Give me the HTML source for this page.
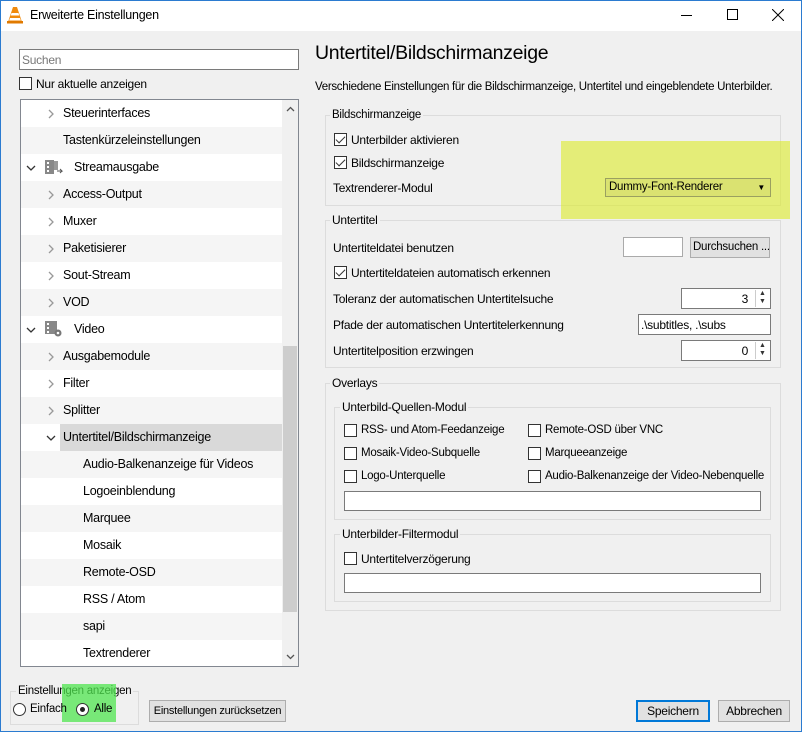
<!DOCTYPE html>
<html><head><meta charset="utf-8"><style>
*{box-sizing:border-box;margin:0;padding:0}
body{width:802px;height:732px;overflow:hidden;background:#f0f0f0;font-family:"Liberation Sans",sans-serif;font-size:12px;letter-spacing:-0.25px;color:#000;position:relative}
.a{position:absolute;white-space:nowrap}
.win{position:absolute;left:0;top:0;width:802px;height:732px;border:1px solid #2b7bd0;pointer-events:none}
.tb{position:absolute;left:0;top:0;width:802px;height:31px;background:#fff}
.row{position:absolute;left:21px;width:261px;height:27px;line-height:27px;font-size:12.5px}
.row.g{background:#f5f5f5}
.chev{position:absolute}
.gb{position:absolute;border:1px solid #dcdcdc}
.lg{position:absolute;background:#f0f0f0;padding:0 2px;line-height:14px;font-size:12px;white-space:nowrap}
.cb{position:absolute;width:13px;height:13px;border:1px solid #333;background:#fff}
.cb.c::after{content:"";position:absolute;left:3px;top:0px;width:4px;height:8px;border:solid #333;border-width:0 1.5px 1.5px 0;transform:rotate(45deg)}
.inp{position:absolute;background:#fff;border:1px solid #7a7a7a}
.btn{position:absolute;background:#e1e1e1;border:1px solid #adadad;text-align:center;font-size:12px;white-space:nowrap;overflow:hidden}
.spin{position:absolute;right:1px;top:1px;width:14px;height:17px;border-left:1px solid #ccc;font-size:7px;line-height:8px;text-align:center;color:#333;letter-spacing:0}
</style></head><body>
<div class="tb"></div>
<svg class="a" style="left:7px;top:6px" width="16" height="18" viewBox="0 0 16 18"><path d="M6 1h4l5 15H1z" fill="#f08a0c"/><path d="M4.5 7h7l.8 2.5H3.7zM3 12h10l.8 2.5H2.2z" fill="#fff"/><rect x="0" y="15" width="16" height="2.5" fill="#e07a00"/></svg>
<div class="a" style="left:30px;top:8px;font-size:12.5px">Erweiterte Einstellungen</div>
<div class="a" style="left:681px;top:15px;width:11px;height:1px;background:#000"></div>
<div class="a" style="left:727px;top:9px;width:11px;height:11px;border:1px solid #000"></div>
<svg class="a" style="left:772px;top:9px" width="12" height="12"><path d="M0 0L12 12M12 0L0 12" stroke="#000" stroke-width="1"/></svg>

<div class="inp" style="left:19px;top:49px;width:280px;height:21px"></div>
<div class="a" style="left:22px;top:53px;color:#777">Suchen</div>
<div class="cb" style="left:19px;top:77px"></div>
<div class="a" style="left:36px;top:77px">Nur aktuelle anzeigen</div>

<div class="a" style="left:20px;top:99px;width:279px;height:568px;border:1px solid #828790;background:#fff"></div>
<div class="a" style="left:21px;top:100px;width:277px;height:566px;overflow:hidden">
<svg width="0" height="0" style="position:absolute"><defs><path id="r" d="M1 1l4 4-4 4" stroke="#999" stroke-width="1.3" fill="none"/><path id="d" d="M1 1l4 4 4-4" stroke="#333" stroke-width="1.3" fill="none"/></defs></svg>
<div class="row" style="left:0;top:0"><svg class="chev" style="left:27px;top:9px" width="7" height="10"><use href="#r"/></svg><span class="a" style="left:42px">Steuerinterfaces</span></div>
<div class="row g" style="left:0;top:27px"><span class="a" style="left:42px">Tastenkürzeleinstellungen</span></div>
<div class="row" style="left:0;top:54px"><svg class="chev" style="left:5px;top:11px" width="10" height="7"><use href="#d"/></svg><svg class="a" style="left:24px;top:6px" width="20" height="15"><rect x="0" y="0" width="9" height="14" fill="#888"/><rect x="2" y="2" width="2" height="2" fill="#fff"/><rect x="2" y="6" width="2" height="2" fill="#fff"/><rect x="2" y="10" width="2" height="2" fill="#fff"/><rect x="9" y="1" width="4" height="9" fill="#999"/><path d="M12 11h5l-2-2M17 11l-2 2" stroke="#555" fill="none"/></svg><span class="a" style="left:53px">Streamausgabe</span></div>
<div class="row g" style="left:0;top:81px"><svg class="chev" style="left:27px;top:9px" width="7" height="10"><use href="#r"/></svg><span class="a" style="left:42px">Access-Output</span></div>
<div class="row" style="left:0;top:108px"><svg class="chev" style="left:27px;top:9px" width="7" height="10"><use href="#r"/></svg><span class="a" style="left:42px">Muxer</span></div>
<div class="row g" style="left:0;top:135px"><svg class="chev" style="left:27px;top:9px" width="7" height="10"><use href="#r"/></svg><span class="a" style="left:42px">Paketisierer</span></div>
<div class="row" style="left:0;top:162px"><svg class="chev" style="left:27px;top:9px" width="7" height="10"><use href="#r"/></svg><span class="a" style="left:42px">Sout-Stream</span></div>
<div class="row g" style="left:0;top:189px"><svg class="chev" style="left:27px;top:9px" width="7" height="10"><use href="#r"/></svg><span class="a" style="left:42px">VOD</span></div>
<div class="row" style="left:0;top:216px"><svg class="chev" style="left:5px;top:11px" width="10" height="7"><use href="#d"/></svg><svg class="a" style="left:24px;top:5px" width="18" height="16"><rect x="0" y="0" width="12" height="13" fill="#888"/><rect x="2" y="2" width="2" height="2" fill="#fff"/><rect x="2" y="6" width="2" height="2" fill="#fff"/><rect x="2" y="10" width="2" height="2" fill="#fff"/><circle cx="13" cy="12" r="3.5" fill="#777"/><circle cx="13" cy="12" r="1.3" fill="#fff"/></svg><span class="a" style="left:53px">Video</span></div>
<div class="row g" style="left:0;top:243px"><svg class="chev" style="left:27px;top:9px" width="7" height="10"><use href="#r"/></svg><span class="a" style="left:42px">Ausgabemodule</span></div>
<div class="row" style="left:0;top:270px"><svg class="chev" style="left:27px;top:9px" width="7" height="10"><use href="#r"/></svg><span class="a" style="left:42px">Filter</span></div>
<div class="row g" style="left:0;top:297px"><svg class="chev" style="left:27px;top:9px" width="7" height="10"><use href="#r"/></svg><span class="a" style="left:42px">Splitter</span></div>
<div class="row" style="left:0;top:324px"><div class="a" style="left:39px;top:0;width:222px;height:27px;background:#d9d9d9"></div><svg class="chev" style="left:25px;top:11px" width="10" height="7"><use href="#d"/></svg><span class="a" style="left:42px">Untertitel/Bildschirmanzeige</span></div>
<div class="row g" style="left:0;top:351px"><span class="a" style="left:62px">Audio-Balkenanzeige für Videos</span></div>
<div class="row" style="left:0;top:378px"><span class="a" style="left:62px">Logoeinblendung</span></div>
<div class="row g" style="left:0;top:405px"><span class="a" style="left:62px">Marquee</span></div>
<div class="row" style="left:0;top:432px"><span class="a" style="left:62px">Mosaik</span></div>
<div class="row g" style="left:0;top:459px"><span class="a" style="left:62px">Remote-OSD</span></div>
<div class="row" style="left:0;top:486px"><span class="a" style="left:62px">RSS / Atom</span></div>
<div class="row g" style="left:0;top:513px"><span class="a" style="left:62px">sapi</span></div>
<div class="row" style="left:0;top:540px"><span class="a" style="left:62px">Textrenderer</span></div>
<div class="a" style="left:261px;top:0;width:16px;height:566px;background:#f0f0f0"></div>
<div class="a" style="left:262px;top:246px;width:14px;height:266px;background:#cdcdcd"></div>
<svg class="a" style="left:265px;top:6px" width="9" height="6"><path d="M1 5l3.5-3.5L8 5" stroke="#555" stroke-width="1.3" fill="none"/></svg>
<svg class="a" style="left:265px;top:554px" width="9" height="6"><path d="M1 1l3.5 3.5L8 1" stroke="#555" stroke-width="1.3" fill="none"/></svg>
</div>

<div class="gb" style="left:10px;top:691px;width:129px;height:34px"></div>
<div class="lg" style="left:16px;top:684px;font-size:11.5px">Einstellungen anzeigen</div>
<div class="a" style="left:62px;top:684px;width:54px;height:38px;background:rgba(80,230,80,.75)"></div>
<div class="a" style="left:13px;top:703px;width:13px;height:13px;border:1px solid #333;border-radius:50%;background:#fff"></div>
<div class="a" style="left:30px;top:703px;font-size:11.5px">Einfach</div>
<div class="a" style="left:76px;top:703px;width:13px;height:13px;border:1px solid #333;border-radius:50%;background:#fff"><div style="position:absolute;left:3px;top:3px;width:5px;height:5px;border-radius:50%;background:#222"></div></div>
<div class="a" style="left:94px;top:703px;font-size:11.5px">Alle</div>
<div class="btn" style="left:149px;top:700px;width:137px;height:22px;line-height:20px;font-size:11px">Einstellungen zurücksetzen</div>
<div class="btn" style="left:636px;top:700px;width:74px;height:22px;line-height:18px;border:2px solid #0078d7">Speichern</div>
<div class="btn" style="left:718px;top:700px;width:72px;height:22px;line-height:20px">Abbrechen</div>

<div class="a" style="left:315px;top:42px;font-size:19.5px;letter-spacing:-0.3px">Untertitel/Bildschirmanzeige</div>
<div class="a" style="left:315px;top:81px;font-size:11.5px;letter-spacing:-0.3px">Verschiedene Einstellungen für die Bildschirmanzeige, Untertitel und eingeblendete Unterbilder.</div>

<div class="gb" style="left:325px;top:115px;width:456px;height:91px"></div>
<div class="lg" style="left:330px;top:108px;font-size:11.5px">Bildschirmanzeige</div>
<div class="cb c" style="left:334px;top:133px"></div><div class="a" style="left:351px;top:133px">Unterbilder aktivieren</div>
<div class="cb c" style="left:334px;top:156px"></div><div class="a" style="left:351px;top:156px">Bildschirmanzeige</div>
<div class="a" style="left:333px;top:181px">Textrenderer-Modul</div>

<div class="gb" style="left:325px;top:220px;width:456px;height:148px"></div>
<div class="lg" style="left:330px;top:213px">Untertitel</div>

<div class="a" style="left:561px;top:141px;width:229px;height:78px;background:rgba(220,235,40,.6)"></div>
<div class="btn" style="left:605px;top:178px;width:166px;height:19px;text-align:left;padding-left:3px;line-height:17px;font-size:11.5px;background:rgba(200,205,100,.35);border-color:#9aa060">Dummy-Font-Renderer<span style="position:absolute;right:5px;top:0;font-size:8px">&#9660;</span></div>

<div class="a" style="left:333px;top:241px">Untertiteldatei benutzen</div>
<div class="inp" style="left:623px;top:237px;width:60px;height:20px;border-color:#aaa"></div>
<div class="btn" style="left:690px;top:237px;width:80px;height:21px;line-height:19px;text-align:left;padding-left:2px;font-size:11.5px">Durchsuchen ...</div>
<div class="cb c" style="left:334px;top:266px"></div><div class="a" style="left:351px;top:266px">Untertiteldateien automatisch erkennen</div>
<div class="a" style="left:333px;top:292px">Toleranz der automatischen Untertitelsuche</div>
<div class="inp" style="left:681px;top:288px;width:90px;height:21px"><span class="a" style="right:22px;top:3px">3</span><div class="spin">&#9650;<br>&#9660;</div></div>
<div class="a" style="left:333px;top:318px">Pfade der automatischen Untertitelerkennung</div>
<div class="inp" style="left:638px;top:314px;width:133px;height:21px"><span class="a" style="left:2px;top:3px">.\subtitles, .\subs</span></div>
<div class="a" style="left:333px;top:344px">Untertitelposition erzwingen</div>
<div class="inp" style="left:681px;top:340px;width:90px;height:21px"><span class="a" style="right:22px;top:3px">0</span><div class="spin">&#9650;<br>&#9660;</div></div>

<div class="gb" style="left:325px;top:383px;width:456px;height:228px"></div>
<div class="lg" style="left:330px;top:376px">Overlays</div>
<div class="gb" style="left:334px;top:407px;width:437px;height:113px"></div>
<div class="lg" style="left:340px;top:400px">Unterbild-Quellen-Modul</div>
<div class="cb" style="left:344px;top:424px"></div><div class="a" style="left:361px;top:424px;font-size:11.5px">RSS- und Atom-Feedanzeige</div>
<div class="cb" style="left:528px;top:424px"></div><div class="a" style="left:545px;top:424px;font-size:11.5px">Remote-OSD über VNC</div>
<div class="cb" style="left:344px;top:447px"></div><div class="a" style="left:361px;top:447px;font-size:11.5px">Mosaik-Video-Subquelle</div>
<div class="cb" style="left:528px;top:447px"></div><div class="a" style="left:545px;top:447px;font-size:11.5px">Marqueeanzeige</div>
<div class="cb" style="left:344px;top:470px"></div><div class="a" style="left:361px;top:470px;font-size:11.5px">Logo-Unterquelle</div>
<div class="cb" style="left:528px;top:470px"></div><div class="a" style="left:545px;top:470px;font-size:11.5px">Audio-Balkenanzeige der Video-Nebenquelle</div>
<div class="inp" style="left:344px;top:491px;width:417px;height:20px"></div>
<div class="gb" style="left:334px;top:534px;width:437px;height:68px"></div>
<div class="lg" style="left:340px;top:527px">Unterbilder-Filtermodul</div>
<div class="cb" style="left:344px;top:552px"></div><div class="a" style="left:361px;top:552px">Untertitelverzögerung</div>
<div class="inp" style="left:344px;top:573px;width:417px;height:20px"></div>
<div class="win"></div>
</body></html>
